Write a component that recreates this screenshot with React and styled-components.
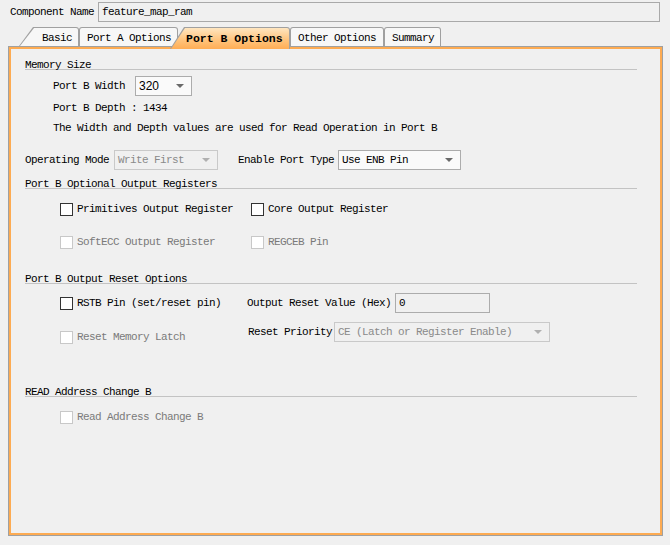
import React from 'react';
import styled, { createGlobalStyle } from 'styled-components';

const GlobalStyle = createGlobalStyle`
  html, body {
    margin: 0;
    padding: 0;
    background: #f0f0f0;
  }
  body {
    font-family: "Liberation Mono", "DejaVu Sans Mono", monospace;
    font-size: 11px;
    letter-spacing: -0.6px;
    color: #000;
  }
`;

const Page = styled.div`
  width: 670px;
  height: 545px;
  background: #f0f0f0;
  overflow: hidden;
`;

const NameRow = styled.div`
  display: flex;
  align-items: center;
  height: 20px;
  padding: 2px 0 0 10px;
`;

const NameLabel = styled.span`
  width: 88px;
`;

const NameInput = styled.div`
  box-sizing: border-box;
  width: 562px;
  height: 20px;
  border: 1px solid #a9a9a9;
  background: #f0f0f0;
  display: flex;
  align-items: center;
  padding-left: 3px;
`;

const TabBar = styled.div`
  display: flex;
  align-items: flex-end;
  margin: 5px 0 0 19px;
  height: 19px;
  position: relative;
  z-index: 2;
`;

const Tab = styled.div`
  position: relative;
  box-sizing: border-box;
  width: ${(p) => p.$width}px;
  height: ${(p) => (p.$active ? 22 : 19)}px;
  margin-left: ${(p) => p.$offset || 0}px;
  margin-bottom: ${(p) => (p.$active ? -3 : 0)}px;
  z-index: ${(p) => (p.$active ? 3 : 1)};
  background: #a0a0a0;
  border-radius: 3px 3px 0 0;
  clip-path: polygon(${(p) => p.$slant || 0}px 0, 100% 0, 100% 100%, 0 100%);
`;

const TabFace = styled.div`
  position: absolute;
  inset: 1px 1px 0 1px;
  border-radius: 2px 2px 0 0;
  clip-path: polygon(${(p) => p.$slant || 0}px 0, 100% 0, 100% 100%, 0 100%);
  background: ${(p) =>
    p.$active ? 'linear-gradient(#ffe6c0, #ffc27a 60%, #ffad55)' : '#f7f7f7'};
  display: flex;
  align-items: flex-start;
  padding: 4px 0 0 ${(p) => p.$pad}px;
  box-sizing: border-box;
  font-weight: ${(p) => (p.$active ? 'bold' : 'normal')};
  font-size: ${(p) => (p.$active ? '11.5px' : '11px')};
  letter-spacing: ${(p) => (p.$active ? '0' : '-0.6px')};
  white-space: nowrap;
`;

const Panel = styled.div`
  box-sizing: border-box;
  margin-left: 8px;
  width: 655px;
  height: 490px;
  border: 1px solid #a0a0a0;
  position: relative;
  z-index: 1;
`;

const PanelInner = styled.div`
  box-sizing: border-box;
  height: 100%;
  border: 2px solid #fdab52;
  padding: 8px 23px 0 14px;
  display: flex;
  flex-direction: column;
`;

const SectionTitle = styled.div`
  line-height: 16px;
  height: 12px;
  border-bottom: 1px solid #c3c3c3;
  margin-top: ${(p) => p.$top}px;
`;

const Row = styled.div`
  display: flex;
  align-items: center;
  height: ${(p) => p.$h || 14}px;
  margin-top: ${(p) => p.$top}px;
  padding-left: ${(p) => p.$indent}px;
  white-space: nowrap;
`;

const Label = styled.span`
  margin-right: ${(p) => p.$gap || 0}px;
  color: ${(p) => (p.$disabled ? '#7a7a7a' : '#000')};
`;

const Select = styled.div`
  box-sizing: border-box;
  width: ${(p) => p.$width}px;
  height: 20px;
  border: 1px solid ${(p) => (p.$disabled ? '#c9c9c9' : '#acacac')};
  background: ${(p) => (p.$disabled ? '#f0f0f0' : '#fafafa')};
  color: ${(p) => (p.$disabled ? '#8a8a8a' : '#000')};
  display: flex;
  align-items: center;
  padding-left: 3px;
  margin-right: ${(p) => p.$gap || 0}px;
`;

const SansValue = styled.span`
  font-family: "Liberation Sans", Arial, sans-serif;
  font-size: 12px;
  letter-spacing: 0;
`;

const Arrow = styled.span`
  margin-left: auto;
  margin-right: 7px;
  width: 0;
  height: 0;
  border-left: 4px solid transparent;
  border-right: 4px solid transparent;
  border-top: 4px solid ${(p) => (p.$disabled ? '#b0b0b0' : '#6a6a6a')};
`;

const TextInput = styled.div`
  box-sizing: border-box;
  width: ${(p) => p.$width}px;
  height: 20px;
  border: 1px solid #acacac;
  background: #f0f0f0;
  display: flex;
  align-items: center;
  padding-left: 3px;
`;

const CheckItem = styled.div`
  display: flex;
  align-items: center;
  gap: 4px;
  width: ${(p) => (p.$width ? `${p.$width}px` : 'auto')};
  margin-top: ${(p) => p.$drop || 0}px;
  color: ${(p) => (p.$disabled ? '#7a7a7a' : '#000')};
`;

const Box = styled.span`
  box-sizing: border-box;
  width: 13px;
  height: 13px;
  flex-shrink: 0;
  background: #fff;
  border: 1px solid ${(p) => (p.$disabled ? '#c8c8c8' : '#333')};
`;

const Check = ({ label, disabled, width, drop }) => (
  <CheckItem $disabled={disabled} $width={width} $drop={drop}>
    <Box $disabled={disabled} />
    <span>{label}</span>
  </CheckItem>
);

const DropDown = ({ width, disabled, gap, children }) => (
  <Select $width={width} $disabled={disabled} $gap={gap}>
    {children}
    <Arrow $disabled={disabled} />
  </Select>
);

const tabs = [
  { name: 'Basic', width: 60, slant: 14, pad: 22 },
  { name: 'Port A Options', width: 99, pad: 7 },
  { name: 'Port B Options', width: 120, slant: 14, pad: 15, active: true, offset: -8 },
  { name: 'Other Options', width: 94, pad: 7 },
  { name: 'Summary', width: 57, pad: 7 },
];

export default function App() {
  return (
    <Page>
      <GlobalStyle />
      <NameRow>
        <NameLabel>Component Name</NameLabel>
        <NameInput>feature_map_ram</NameInput>
      </NameRow>

      <TabBar>
        {tabs.map((t) => (
          <Tab key={t.name} $width={t.width} $slant={t.slant} $active={t.active} $offset={t.offset}>
            <TabFace $slant={t.slant} $active={t.active} $pad={t.pad}>
              {t.name}
            </TabFace>
          </Tab>
        ))}
      </TabBar>

      <Panel>
        <PanelInner>
          <SectionTitle $top={0}>Memory Size</SectionTitle>
          <Row $h={20} $top={6} $indent={28}>
            <Label $gap={10}>Port B Width</Label>
            <DropDown width={57}>
              <SansValue>320</SansValue>
            </DropDown>
          </Row>
          <Row $top={5} $indent={28}>
            Port B Depth : 1434
          </Row>
          <Row $top={6} $indent={28}>
            The Width and Depth values are used for Read Operation in Port B
          </Row>
          <Row $h={20} $top={15} $indent={-1}>
            <Label $gap={5}>Operating Mode</Label>
            <DropDown width={104} disabled gap={20}>
              Write First
            </DropDown>
            <Label $gap={4}>Enable Port Type</Label>
            <DropDown width={123}>Use ENB Pin</DropDown>
          </Row>

          <SectionTitle $top={6}>Port B Optional Output Registers</SectionTitle>
          <Row $top={13} $indent={35}>
            <Check label="Primitives Output Register" width={191} />
            <Check label="Core Output Register" />
          </Row>
          <Row $top={19} $indent={35}>
            <Check label="SoftECC Output Register" width={191} disabled />
            <Check label="REGCEB Pin" disabled />
          </Row>

          <SectionTitle $top={22}>Port B Output Reset Options</SectionTitle>
          <Row $h={20} $top={9} $indent={35}>
            <Check label="RSTB Pin (set/reset pin)" width={187} />
            <Label $gap={4}>Output Reset Value (Hex)</Label>
            <TextInput $width={95}>0</TextInput>
          </Row>
          <Row $h={20} $top={9} $indent={35}>
            <Check label="Reset Memory Latch" width={188} disabled drop={10} />
            <Label $gap={2}>Reset Priority</Label>
            <DropDown width={216} disabled>
              CE (Latch or Register Enable)
            </DropDown>
          </Row>

          <SectionTitle $top={42}>READ Address Change B</SectionTitle>
          <Row $top={13} $indent={35}>
            <Check label="Read Address Change B" disabled />
          </Row>
        </PanelInner>
      </Panel>
    </Page>
  );
}
